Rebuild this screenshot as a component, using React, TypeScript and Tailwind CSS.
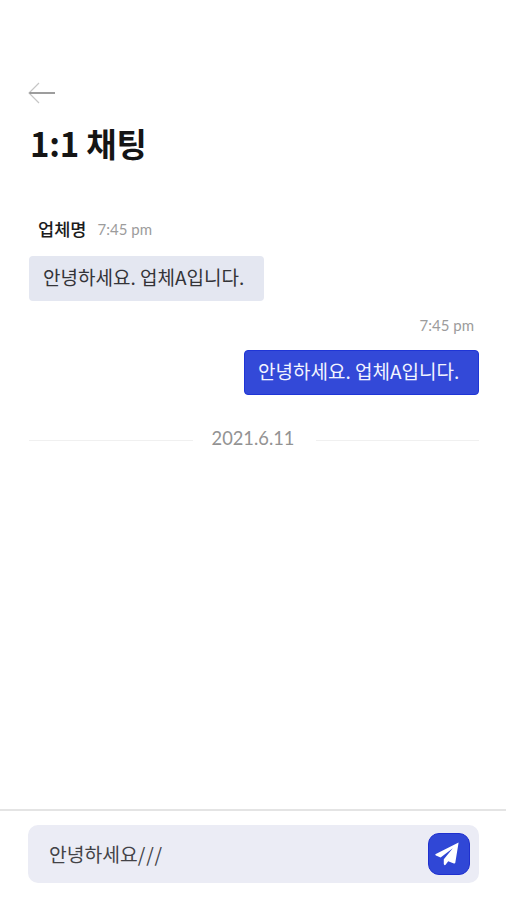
function BackButton() {
  return (
    <button className="block w-[27px] h-[22px]" aria-label="Back">
      <svg width="27" height="22" viewBox="0 0 27 22" fill="none">
        <path d="M11 1L1 11L11 21" stroke="#c6c6c6" strokeWidth="1.2" />
        <path d="M1.5 11H27" stroke="#858585" strokeWidth="1.6" />
      </svg>
    </button>
  );
}

function PlaneIcon() {
  return (
    <svg width="24" height="24" viewBox="0 0 24 24" fill="currentColor">
      <path d="M23.6.5L.8 12.1C.1 12.5.2 13.2.9 13.5L5.6 15.6L17.8 6.2L8.8 17.2V22.1C8.9 23.2 10 23.5 10.6 22.7L13.2 19.2L18.9 21.5C19.6 21.8 20.2 21.4 20.3 20.8Z" />
    </svg>
  );
}

function DateDivider({ date }: { date: string }) {
  return (
    <div className="mt-[31px] flex items-center justify-between">
      <span className="w-[164px] h-px mt-[5px] bg-[#f0f0f0]"></span>
      <span className="-ml-[3px] font-['Lato',sans-serif] text-[18.3px] leading-6 text-[#939393]">{date}</span>
      <span className="w-[163px] h-px mt-[5px] bg-[#f0f0f0]"></span>
    </div>
  );
}

export default function App() {
  return (
    <div className="h-[900px] w-[506px] flex flex-col overflow-hidden bg-white font-['Noto_Sans_CJK_KR',sans-serif]">
      <header className="pt-[82px] pl-[28px]">
        <BackButton />
        <h1 className="mt-[15px] ml-[2px] text-[33px] leading-[48px] font-bold tracking-[-0.2px] text-[#151515]">1:1 채팅</h1>
      </header>

      <main className="flex-1 pt-[50px] pl-[29px] pr-[27px]">
        {/* Received */}
        <div className="flex flex-col items-start">
          <div className="flex items-center gap-[11px] h-6 pl-[9px]">
            <span className="text-[17.6px] font-medium leading-6 text-[#1c1c1c]">업체명</span>
            <span className="font-['Lato',sans-serif] text-[15px] leading-6 text-[#9c9c9c]">7:45 pm</span>
          </div>
          <p className="mt-[15px] h-[45px] w-[235px] rounded-[4px] bg-[#e4e7f1] pl-[14px] text-[19px] leading-[42px] whitespace-nowrap text-[#343438]">
            안녕하세요. 업체A입니다.
          </p>
        </div>

        {/* Sent */}
        <div className="mt-[12px] flex flex-col items-end">
          <span className="pr-[5px] font-['Lato',sans-serif] text-[15px] leading-6 text-[#9c9c9c]">7:45 pm</span>
          <p className="mt-[13px] h-[45px] w-[235px] rounded-[4px] border border-[#1f35d6] bg-[#3349d8] pl-[13px] text-[19px] leading-[40px] whitespace-nowrap text-[#f2f4ff]">
            안녕하세요. 업체A입니다.
          </p>
        </div>

        <DateDivider date="2021.6.11" />
      </main>

      <footer className="h-[91px] border-t-2 border-[#e4e4e4] pt-[14px] pl-[28px] pr-[27px]">
        <div className="h-[58px] flex items-center justify-between rounded-[10px] bg-[#ebecf5] pl-[21px] pr-[9px]">
          <span className="text-[19.3px] leading-7 text-[#434347]">
            안녕하세요<span className="tracking-[0.9px]">///</span>
          </span>
          <button
            className="flex h-[42px] w-[42px] items-center justify-center rounded-[11px] border border-[#1f30cf] bg-[#3047d6] pr-[5px] text-white"
            aria-label="Send"
          >
            <PlaneIcon />
          </button>
        </div>
      </footer>
    </div>
  );
}
